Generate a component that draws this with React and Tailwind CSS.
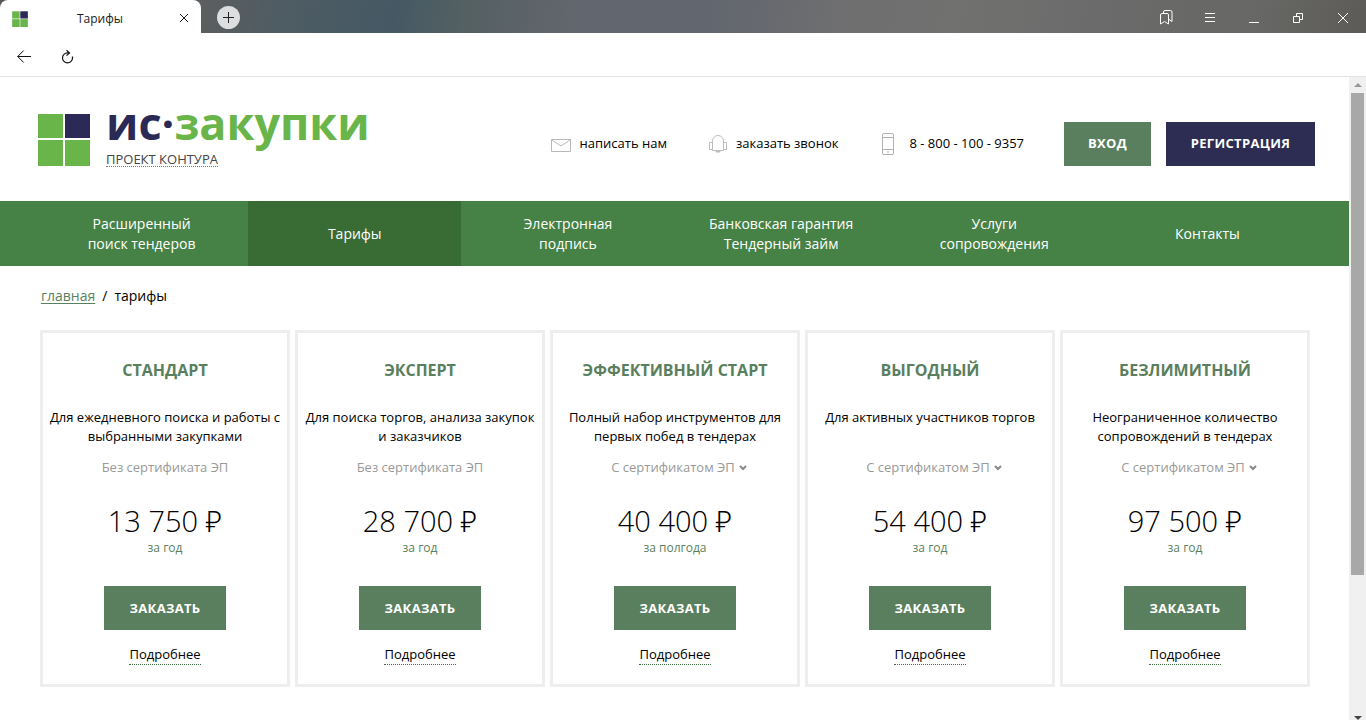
import React from "react";

const plans = [
  { name: "СТАНДАРТ", text: ["Для ежедневного поиска и работы с", "выбранными закупками"], cert: "Без сертификата ЭП", price: "13 750 ₽", term: "за год" },
  { name: "ЭКСПЕРТ", text: ["Для поиска торгов, анализа закупок", "и заказчиков"], cert: "Без сертификата ЭП", price: "28 700 ₽", term: "за год" },
  { name: "ЭФФЕКТИВНЫЙ СТАРТ", text: ["Полный набор инструментов для", "первых побед в тендерах"], cert: "С сертификатом ЭП", menu: true, price: "40 400 ₽", term: "за полгода" },
  { name: "ВЫГОДНЫЙ", text: ["Для активных участников торгов"], cert: "С сертификатом ЭП", menu: true, price: "54 400 ₽", term: "за год" },
  { name: "БЕЗЛИМИТНЫЙ", text: ["Неограниченное количество", "сопровождений в тендерах"], cert: "С сертификатом ЭП", menu: true, price: "97 500 ₽", term: "за год" },
];

const menu = [
  ["Расширенный", "поиск тендеров"],
  ["Тарифы"],
  ["Электронная", "подпись"],
  ["Банковская гарантия", "Тендерный займ"],
  ["Услуги", "сопровождения"],
  ["Контакты"],
];

function Squares({ className }) {
  return (
    <svg className={className} viewBox="0 0 52 53" aria-hidden="true">
      <rect x="0" y="1" width="25" height="24" fill="#69b54a" />
      <rect x="27" y="1" width="25" height="24" fill="#2b2a57" />
      <rect x="0" y="27" width="25" height="26" fill="#69b54a" />
      <rect x="27" y="27" width="25" height="26" fill="#69b54a" />
    </svg>
  );
}

function TitleBar() {
  return (
    <div className="flex h-[33px] items-stretch bg-[linear-gradient(100deg,#555555_0%,#5c5e5f_15%,#4f5c63_20%,#455964_29%,#546062_34%,#62666e_42%,#62666e_52%,#6f6f70_62%,#717170_70%,#6b6b6b_80%,#676765_92%,#5c5b57_100%)]">
      <div className="flex w-[201px] items-center rounded-t-lg bg-white pr-[7px] pl-3">
        <Squares className="mt-1 size-4" />
        <span className="ml-[49px] flex-1 pt-1 text-xs text-[#222]">Тарифы</span>
        <button type="button" aria-label="Закрыть вкладку" className="mt-0.5 flex size-5 items-center justify-center">
          <svg width="10" height="10" viewBox="0 0 10 10" stroke="#222" fill="none"><path d="M1 1l8 8M9 1l-8 8" /></svg>
        </button>
      </div>
      <button type="button" aria-label="Новая вкладка" className="mt-0.5 ml-4 flex size-[23px] items-center justify-center self-center rounded-full bg-[#dcdee0]">
        <svg width="11" height="11" viewBox="0 0 11 11" stroke="#222" fill="none"><path d="M5.500 0v11M0 5.500h11" /></svg>
      </button>
      <div className="ml-auto flex items-center pt-0.5 text-white">
        <button type="button" aria-label="Закладки" className="flex w-11 justify-center">
          <svg width="13" height="15" viewBox="0 0 13 15" fill="none" stroke="currentColor"><path d="M.5 5a1.500 1.500 0 0 1 1.500-1.500h5A1.500 1.500 0 0 1 8.500 5v9L4.500 11.500.5 14zM3.500 3V2A1.500 1.500 0 0 1 5 .5h5.500A1.500 1.500 0 0 1 12 2v9.500l-3-2" /></svg>
        </button>
        <button type="button" aria-label="Меню" className="flex w-11 justify-center">
          <svg width="10" height="9" viewBox="0 0 10 9" stroke="currentColor"><path d="M0 .5h10M0 4.500h10M0 8.500h10" /></svg>
        </button>
        <button type="button" aria-label="Свернуть" className="flex w-11 justify-center">
          <svg width="10" height="10" viewBox="0 0 10 10" stroke="currentColor"><path d="M0 9.500h10" /></svg>
        </button>
        <button type="button" aria-label="Восстановить" className="flex w-11 justify-center">
          <svg width="10" height="10" viewBox="0 0 10 10" fill="none" stroke="currentColor"><path d="M.5 3.500h6v6h-6zM3.500 3.500v-3h6v6h-3" /></svg>
        </button>
        <button type="button" aria-label="Закрыть" className="flex w-[46px] justify-center">
          <svg width="10" height="10" viewBox="0 0 10 10" stroke="currentColor"><path d="M0 0l10 10M10 0L0 10" /></svg>
        </button>
      </div>
    </div>
  );
}

function Toolbar() {
  return (
    <div className="flex h-11 items-center gap-[30px] border-b border-[#e4e4e4] bg-white pt-1 pl-[17px]">
      <button type="button" aria-label="Назад">
        <svg width="14" height="13" viewBox="0 0 14 13" fill="none" stroke="#111"><path d="M14 6.500H.7M6.700 .5L.7 6.500l6 6" /></svg>
      </button>
      <button type="button" aria-label="Обновить">
        <svg width="13" height="14" viewBox="0 0 13 14" fill="none" stroke="#111" strokeWidth="1.200"><path d="M8.300 2.900H6.500A5 5 0 1 0 11.500 7.900V6.500M5.500 .2L8.500 2.900L5.500 5.600" /></svg>
      </button>
    </div>
  );
}

function Header() {
  return (
    <header className="flex h-[124px] items-start justify-between pt-9 pr-[34px] pl-[38px]">
      <a href="#home" className="flex items-start gap-4">
        <Squares className="h-[53px] w-[52px]" />
        <span className="flex flex-col">
          <span className="h-10 text-[45px] leading-5 font-bold text-[#69b54a]"><span className="text-[#2b2a57]">ис·</span>закупки</span>
          <span className="self-start border-b border-dotted border-[#777] text-[13px] leading-[13px] text-[#444]">ПРОЕКТ КОНТУРА</span>
        </span>
      </a>
      <div className="mt-[9px] flex items-center">
        <a href="#mail" className="flex items-center gap-[9px] text-[13px]">
          <svg className="mt-0.5" width="20" height="13" viewBox="0 0 20 13" fill="none" stroke="#b9b9b9"><path d="M.5 .5h19v12H.5zM1 1l9 6 9-6" /></svg>
          написать нам
        </a>
        <a href="#call" className="ml-[42px] flex items-center gap-[9px] text-[13px]">
          <svg width="18" height="18" viewBox="0 0 18 18" fill="none" stroke="#bdbdbd"><path d="M3.500 15.500V6a5.500 5.500 0 0 1 11 0v9.500M3.500 7.500h-3v7h3M14.500 7.500h3v7h-3M3.500 15.500h3.500M14.500 15.500H11" /><path d="M7 15.500h4v1.500H7z" fill="#bdbdbd" /></svg>
          заказать звонок
        </a>
        <a href="tel:88001009357" className="ml-11 flex items-center gap-[15px] text-[13px]">
          <svg width="12" height="22" viewBox="0 0 12 22" fill="none" stroke="#b0b0b0"><rect x=".5" y=".5" width="11" height="21" rx="1.500" /><path d="M.5 4.500h11M.5 16.500h11M5 19h2" /></svg>
          8 - 800 - 100 - 9357
        </a>
        <button type="button" className="ml-10 h-11 w-[87px] bg-[#5a7f5e] text-[13px] font-bold tracking-wide text-white">ВХОД</button>
        <button type="button" className="ml-[15px] h-11 w-[149px] bg-[#2d2c52] text-[13px] font-bold tracking-wide text-white">РЕГИСТРАЦИЯ</button>
      </div>
    </header>
  );
}

function Plan({ plan }) {
  return (
    <article className="flex flex-col items-center border-3 border-[#eee] pt-[25px] pb-[19px] text-center text-[13px] leading-[19px]">
      <h2 className="text-base leading-6 font-bold whitespace-nowrap text-[#5a7f5e]">{plan.name}</h2>
      <p className="mt-[26px] h-[38px] whitespace-nowrap">
        {plan.text.map((line) => <span key={line} className="block">{line}</span>)}
      </p>
      {plan.menu ? (
        <button type="button" className="mt-3 flex items-center gap-1 pl-2 text-[#999]">
          {plan.cert}
          <svg width="8" height="6" viewBox="0 0 8 6" fill="none" stroke="#888" strokeWidth="2"><path d="M1 1l3 3 3-3" /></svg>
        </button>
      ) : (
        <p className="mt-3 text-[#999]">{plan.cert}</p>
      )}
      <p className="mt-[25px] text-[29px] leading-[38px] font-light">{plan.price}</p>
      <p className="text-xs leading-4 text-[#5a7f5e]">{plan.term}</p>
      <button type="button" className="mt-[30px] h-11 w-[122px] bg-[#5a7f5e] font-bold tracking-wide text-white">ЗАКАЗАТЬ</button>
      <a href="#details" className="mt-[15px] border-b border-dotted border-[#3a6a40]">Подробнее</a>
    </article>
  );
}

export default function App() {
  return (
    <div className="flex h-screen flex-col overflow-hidden bg-white font-['Open_Sans','Noto_Sans',sans-serif] text-black">
      <TitleBar />
      <Toolbar />
      <div className="flex min-h-0 flex-1">
        <main className="min-w-0 flex-1">
          <Header />
          <nav className="flex h-[65px] bg-[#468145] px-[35px] text-sm leading-5 font-medium text-white">
            {menu.map((lines) => (
              <a key={lines[0]} href="#page" className={lines[0] === "Тарифы" ? "flex flex-1 basis-0 flex-col items-center justify-center bg-[#396b35]" : "flex flex-1 basis-0 flex-col items-center justify-center"}>
                {lines.map((line) => <span key={line} className="whitespace-nowrap">{line}</span>)}
              </a>
            ))}
          </nav>
          <div className="flex gap-[7px] px-[41px] pt-5 text-sm leading-5">
            <a href="#home" className="text-[#5a7f5e] underline underline-offset-2">главная</a>
            <span>/</span>
            <span>тарифы</span>
          </div>
          <section className="grid grid-cols-5 gap-[5px] pt-6 pr-[39px] pl-10">
            {plans.map((plan) => <Plan key={plan.name} plan={plan} />)}
          </section>
        </main>
        <div className="flex w-[17px] flex-col items-center bg-[#f0f0f0]" aria-hidden="true">
          <svg className="my-1.5 shrink-0" width="8" height="4" viewBox="0 0 8 4" fill="#999"><path d="M4 0l4 4H0z" /></svg>
          <div className="h-3/4 w-[13px] bg-[#a8a8a8]" />
          <svg className="mt-auto shrink-0" width="8" height="4" viewBox="0 0 8 4" fill="#444"><path d="M0 0h8L4 4z" /></svg>
        </div>
      </div>
    </div>
  );
}
